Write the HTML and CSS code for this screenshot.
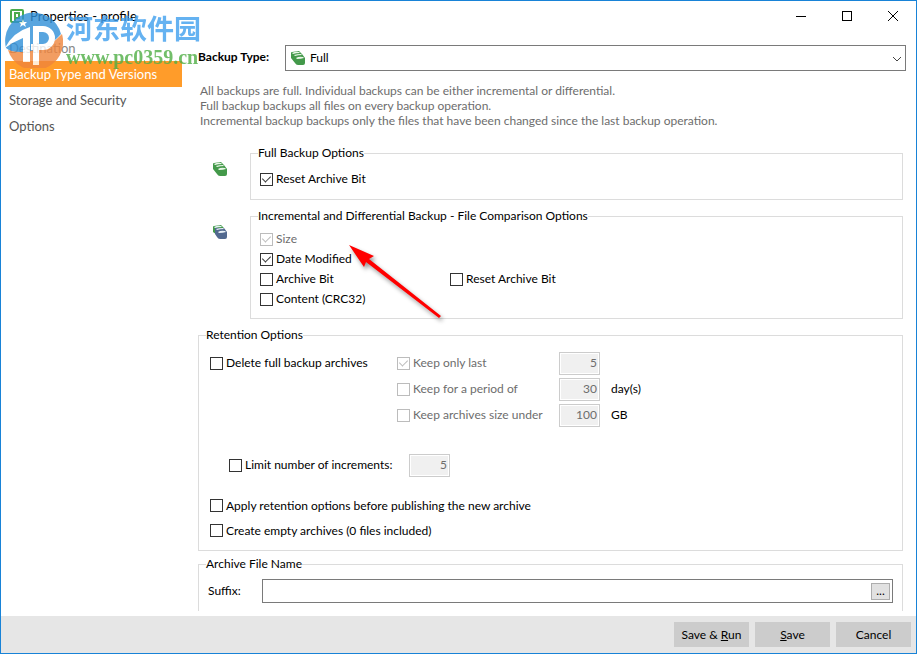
FILE: index.html
```
<!DOCTYPE html>
<html lang="en">

<head>
    <meta charset="UTF-8">
    <meta name="viewport" content="width=device-width, initial-scale=1.0">
    <title>Properties - profile</title>
    <link rel="stylesheet" href="styles.css">
</head>

<body>
    <div class="window">
        <header class="titlebar">
            <svg class="app-icon" width="14" height="14" viewBox="0 0 14 14">
                <rect x="1" y="1" width="12" height="12" rx="1" fill="#fff" stroke="#4bab4b" stroke-width="2"/>
                <path d="M5 12V4h4v5H5" fill="none" stroke="#4bab4b" stroke-width="2"/>
            </svg>
            <h1 class="title">Properties - profile</h1>
            <div class="window-buttons">
                <button type="button" aria-label="Minimize">
                    <svg width="12" height="12" viewBox="0 0 12 12"><path d="M1 6.5h10" stroke="#000"/></svg>
                </button>
                <button type="button" aria-label="Maximize">
                    <svg width="12" height="12" viewBox="0 0 12 12"><rect x="1.5" y="1.5" width="9" height="9" fill="none" stroke="#000"/></svg>
                </button>
                <button type="button" aria-label="Close">
                    <svg width="12" height="12" viewBox="0 0 12 12"><path d="M1 1l10 10M11 1L1 11" stroke="#000"/></svg>
                </button>
            </div>
        </header>

        <div class="body">
            <nav class="sidebar">
                <a href="#destination" class="faded">Destination</a>
                <a href="#versions" class="active">Backup Type and Versions</a>
                <a href="#storage">Storage and Security</a>
                <a href="#options">Options</a>
            </nav>

            <main class="content">
                <div class="type-row">
                    <label for="backup-type">Backup Type:</label>
                    <div class="select-box">
                        <select id="backup-type">
                            <option>Full</option>
                        </select>
                        <svg class="select-icon" width="16" height="16" viewBox="0 0 16 16">
                            <path d="M1 3q0-1 1-1l7-1 3 3 3 4v5q0 2-2 2H8q-2 0-3-2L1 8z" fill="#43994a"/>
                            <path d="M2 3q4-2 7-1l1 1q-4 0-7 1zM4 5q3-1 7-1l1 1q-4 0-7 1zM6 8q3-2 7-1l1 1q-3 1-7 1z" fill="#e8f6e6"/>
                        </svg>
                        <svg class="select-arrow" width="10" height="6" viewBox="0 0 10 6"><path d="M1 1l4 4 4-4" fill="none" stroke="#444"/></svg>
                    </div>
                </div>

                <p class="description">
                    All backups are full. Individual backups can be either incremental or differential.<br>
                    Full backup backups all files on every backup operation.<br>
                    Incremental backup backups only the files that have been changed since the last backup operation.
                </p>

                <div class="option-block">
                    <svg class="block-icon" width="16" height="16" viewBox="0 0 16 16">
                        <path d="M1 3q0-1 1-1l7-1 3 3 3 4v5q0 2-2 2H8q-2 0-3-2L1 8z" fill="#43994a"/>
                        <path d="M2 3q4-2 7-1l1 1q-4 0-7 1zM4 5q3-1 7-1l1 1q-4 0-7 1zM6 8q3-2 7-1l1 1q-3 1-7 1z" fill="#e8f6e6"/>
                    </svg>
                    <fieldset class="full-options">
                        <legend>Full Backup Options</legend>
                        <label class="check"><input type="checkbox" checked>Reset Archive Bit</label>
                    </fieldset>
                </div>

                <div class="option-block">
                    <svg class="block-icon" width="16" height="16" viewBox="0 0 16 16">
                        <path d="M1 3q0-1 1-1l7-1 3 3-7 7-4-3z" fill="#43994a"/>
                        <path d="M3 4l9 0 3 4v5q0 2-2 2H8q-2 0-3-2l-2-3z" fill="#52698f"/>
                        <path d="M2 3q4-2 7-1l1 1q-4 0-7 1zM4 5q3-1 7-1l1 1q-4 0-7 1zM6 8q3-2 7-1l1 1q-3 1-7 1z" fill="#e8f0f6"/>
                    </svg>
                    <fieldset class="compare-options">
                        <legend>Incremental and Differential Backup - File Comparison Options</legend>
                        <label class="check"><input type="checkbox" checked disabled>Size</label>
                        <label class="check"><input type="checkbox" checked>Date Modified</label>
                        <div class="pair">
                            <label class="check"><input type="checkbox">Archive Bit</label>
                            <label class="check"><input type="checkbox">Reset Archive Bit</label>
                        </div>
                        <label class="check"><input type="checkbox">Content (CRC32)</label>
                    </fieldset>
                </div>

                <fieldset class="retention">
                    <legend>Retention Options</legend>
                    <div class="keep-grid">
                        <label class="check"><input type="checkbox">Delete full backup archives</label>
                        <label class="check"><input type="checkbox" checked disabled>Keep only last</label>
                        <input class="number" type="text" value="5" aria-label="Archives to keep" disabled>
                        <span></span>

                        <span></span>
                        <label class="check"><input type="checkbox" disabled>Keep for a period of</label>
                        <input class="number" id="days" type="text" value="30" disabled>
                        <label for="days">day(s)</label>

                        <span></span>
                        <label class="check"><input type="checkbox" disabled>Keep archives size under</label>
                        <input class="number" id="size" type="text" value="100" disabled>
                        <label for="size">GB</label>
                    </div>
                    <div class="limit-row">
                        <label class="check"><input type="checkbox">Limit number of increments:</label>
                        <input class="number" type="text" value="5" aria-label="Number of increments" disabled>
                    </div>
                    <label class="check tall"><input type="checkbox">Apply retention options before publishing the new archive</label>
                    <label class="check tall"><input type="checkbox">Create empty archives (0 files included)</label>
                </fieldset>

                <fieldset class="archive-name">
                    <legend>Archive File Name</legend>
                    <div class="suffix-row">
                        <label for="suffix">Suffix:</label>
                        <div class="suffix-box">
                            <input id="suffix" type="text">
                            <button type="button">...</button>
                        </div>
                    </div>
                </fieldset>
            </main>
        </div>

        <footer class="footer">
            <button type="button">Save &amp; <u>R</u>un</button>
            <button type="button"><u>S</u>ave</button>
            <button type="button">Cancel</button>
        </footer>
    </div>

    <!-- site watermark over the top left corner -->
    <div class="watermark">
        <svg width="58" height="58" viewBox="0 0 58 58">
            <path d="M1 38A28 28 0 1 1 56 24Q40 42 22 42Q8 44 1 38z" fill="#2f8fd8"/>
            <path d="M3 40Q14 44 30 40Q46 36 57 24A28 28 0 0 1 3 40z" fill="#f0853c"/>
            <path d="M0 38Q8 22 25 17V52h-7V28Q8 32 0 38z" fill="#fff"/>
            <path d="M31 55V19h7a8 8 0 0 1 0 18H26" fill="none" stroke="#fff" stroke-width="6"/>
            <path d="M18 9l1 3 3 0-2 2 1 3-3-2-3 2 1-3-2-2 3 0z" fill="#fff"/>
        </svg>
        <div class="watermark-text">
            <span class="site-name" lang="zh">河东软件园</span>
            <span class="site-url">www.pc0359.cn</span>
        </div>
    </div>

    <svg class="pointer" width="110" height="90" viewBox="0 0 110 90">
        <path d="M8 8l25 11-5 3L100 79l-2 2L25 25l-2 5z" fill="#f00"/>
    </svg>
</body>

</html>
```
FILE: styles.css
```
* {
    box-sizing: border-box;
}

body {
    margin: 0;
    font-family: Lato, "Noto Sans CJK SC", sans-serif;
    font-size: 12px;
    line-height: 16px;
    color: #000;
    background-color: #fff;
}

button,
input,
select {
    font: inherit;
    color: inherit;
    margin: 0;
}

.window {
    display: flex;
    flex-direction: column;
    min-height: 100vh;
    border: 1px solid #1883d7;
}

/* Title bar */
.titlebar {
    display: flex;
    align-items: center;
    height: 30px;
    padding-left: 9px;
}

.title {
    flex: 1;
    margin: 0 0 0 6px;
    font-size: 13px;
    font-weight: 400;
}

.window-buttons {
    display: flex;
}

.window-buttons button {
    display: flex;
    align-items: center;
    justify-content: center;
    width: 46px;
    height: 28px;
    padding: 0;
    border: none;
    background: none;
}

.body {
    display: flex;
    flex: 1;
}

/* Sidebar */
.sidebar {
    flex: none;
    width: 181px;
    margin: 4px 16px 0 0;
    padding-left: 4px;
}

.sidebar a {
    display: block;
    padding: 0 4px;
    font-size: 13px;
    line-height: 26px;
    color: #555;
    text-decoration: none;
}

.sidebar .faded {
    color: #888;
}

.sidebar .active {
    color: #fff;
    background-color: #ff9c2a;
}

/* Main area */
.content {
    flex: 1;
    padding: 14px 13px 0 0;
}

.type-row {
    display: flex;
    margin-right: -3px;
}

.type-row label {
    width: 87px;
    font-weight: 700;
    line-height: 24px;
}

.select-box {
    position: relative;
    flex: 1;
}

.select-box select {
    display: block;
    width: 100%;
    height: 26px;
    padding: 0 24px;
    border: 1px solid #7a7a7a;
    border-radius: 0;
    background-color: #fff;
    appearance: none;
}

.select-icon {
    position: absolute;
    left: 5px;
    top: 5px;
}

.select-arrow {
    position: absolute;
    right: 4px;
    top: 11px;
}

.description {
    margin: 12px 0 17px 2px;
    line-height: 15px;
    color: #6d6d6d;
}

.option-block {
    display: flex;
    margin-bottom: 8px;
}

.block-icon {
    flex: none;
    margin: 16px 22px 0 14px;
}

fieldset {
    flex: 1;
    min-width: 0;
    margin: 0;
    padding: 0 7px;
    border: 1px solid #dcdcdc;
}

legend {
    padding: 0;
}

.full-options {
    padding: 8px 9px 10px;
}

.compare-options {
    padding: 5px 9px 9px;
}

.full-options legend,
.compare-options legend {
    margin-left: -2px;
}

.check {
    display: flex;
    align-items: center;
    gap: 3px;
    height: 20px;
    white-space: nowrap;
}

.check input {
    display: flex;
    justify-content: center;
    flex: none;
    width: 13px;
    height: 13px;
    border: 1px solid #333;
    background-color: #fff;
    appearance: none;
}

.check input:checked::after {
    content: "";
    width: 4px;
    height: 7px;
    border: solid #333;
    border-width: 0 1px 1px 0;
    transform: rotate(45deg);
}

.check:has(input:disabled) {
    color: #6d6d6d;
}

.check input:disabled,
.check input:disabled::after {
    border-color: #bcbcbc;
}

.pair {
    display: grid;
    grid-template-columns: 190px auto;
}

/* Retention */
.retention {
    padding: 7px 11px;
}

.retention legend {
    margin-left: -4px;
}

.keep-grid {
    display: grid;
    grid-template-columns: 187px 162px 52px auto;
    grid-auto-rows: 26px;
    align-items: center;
}

.number {
    width: 41px;
    height: 23px;
    padding: 0 2px 2px;
    border: 1px solid #ccc;
    outline: 1px solid #fff;
    outline-offset: -2px;
    background-color: #f0f0f0;
    color: #6d6d6d;
    text-align: right;
}

.limit-row {
    display: grid;
    grid-template-columns: 180px auto;
    align-items: center;
    height: 26px;
    margin: 24px 0 15px 19px;
}

.check.tall {
    height: 25px;
}

/* Archive file name */
.archive-name {
    margin-top: 5px;
    padding: 7px 9px 8px;
    border-bottom: none;
}

.archive-name legend {
    margin-left: -2px;
}

.suffix-row {
    display: flex;
    align-items: center;
}

.suffix-row label {
    width: 54px;
}

.suffix-box {
    display: flex;
    align-items: center;
    flex: 1;
    height: 24px;
    padding-right: 2px;
    border: 1px solid #7a7a7a;
}

.suffix-box input {
    flex: 1;
    min-width: 0;
    border: none;
    outline: none;
}

.suffix-box button {
    width: 19px;
    height: 17px;
    padding: 0;
    border: 1px solid #adadad;
    background-color: #e1e1e1;
    line-height: 12px;
}

/* Footer */
.footer {
    display: flex;
    justify-content: flex-end;
    gap: 6px;
    margin-top: 4px;
    padding: 6px 5px;
    background-color: #e6e6e6;
}

.footer button {
    width: 75px;
    height: 25px;
    padding: 0;
    border: none;
    background-color: #ccc;
}

.watermark {
    position: absolute;
    top: 10px;
    left: 5px;
    display: flex;
    gap: 3px;
    opacity: 0.8;
    pointer-events: none;
}

.watermark-text {
    display: flex;
    flex-direction: column;
}

.site-name {
    font-family: "Noto Sans CJK SC", sans-serif;
    font-size: 27px;
    font-weight: 700;
    line-height: 36px;
    color: #3f9fee;
}

.site-url {
    font-family: "Liberation Serif", serif;
    font-size: 20px;
    font-weight: 700;
    line-height: 22px;
    color: #4fae45;
}

.pointer {
    position: absolute;
    top: 237px;
    left: 341px;
    filter: drop-shadow(2px 3px 2px rgba(0, 0, 0, 0.4));
    pointer-events: none;
}
```
